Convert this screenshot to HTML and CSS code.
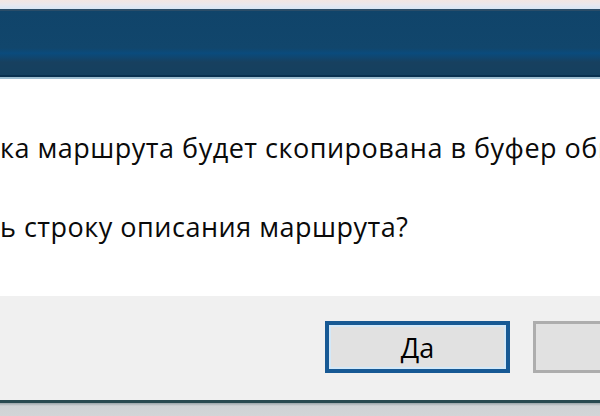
FILE: index.html
```html
<!DOCTYPE html>
<html lang="ru">

<head>
    <meta charset="UTF-8">
    <meta name="viewport" content="width=device-width, initial-scale=1.0">
    <title>Маршрут</title>
    <link rel="stylesheet" href="styles.css">
</head>

<body>
    <div class="window">
        <div class="glow"></div>
        <div class="titlebar"></div>

        <div class="message">
            <p>ка маршрута будет скопирована в буфер обмена.</p>
            <p>ь строку описания маршрута?</p>
        </div>

        <div class="buttons">
            <button class="btn default" type="button">Да</button>
            <button class="btn" type="button">Нет</button>
        </div>
    </div>

    <div class="taskbar"></div>
</body>

</html>
```

FILE: styles.css
```css
html,
body {
    margin: 0;
    height: 416px;
    overflow: hidden;
    background: #d3d5d7;
}

body {
    font-family: 'Open Sans', 'Noto Sans', sans-serif;
    color: #0a0a0a;
}

.window {
    width: 740px;
    background: #fff;
}

.glow {
    height: 9px;
    background: linear-gradient(#f3e6e2, #e9e8ee 50%, #d8e6f5);
}

.titlebar {
    height: 64px;
    border-top: 2px solid #2b4d68;
    border-bottom: 2px solid #09304f;
    background: linear-gradient(#10446a, #11466c 58%, #0a4b7d 66%, #17405f 80%, #14405f);
    box-shadow: 0 2px 0 #9dbdd0;
}

.message {
    height: 219px;
    padding-top: 53px;
    box-sizing: border-box;
    font-size: 27px;
    line-height: 36px;
    letter-spacing: 0.5px;
    white-space: nowrap;
}

.message p {
    margin: 0 0 43px;
}

.buttons {
    display: flex;
    justify-content: flex-end;
    gap: 23px;
    height: 104px;
    padding: 25px 22px 0 0;
    box-sizing: border-box;
    background: #f0f0f0;
}

.btn {
    width: 185px;
    height: 52px;
    padding: 0;
    font-family: inherit;
    font-size: 27px;
    color: #000;
    background: #e1e1e1;
    border: 3px solid #adadad;
}

.btn.default {
    border: 4px solid #175994;
    box-shadow: inset 0 0 0 2px #d3e8f8;
}

.taskbar {
    height: 17px;
    border-top: 3px solid #294a50;
    box-sizing: border-box;
    background: linear-gradient(#9aa4a8, #d0d3d5 3px, #d3d5d7);
}
```
